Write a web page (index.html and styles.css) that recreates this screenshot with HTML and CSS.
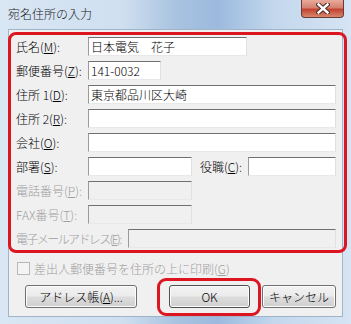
FILE: index.html
```html
<!DOCTYPE html>
<html lang="ja">
<head>
<meta charset="UTF-8">
<title>宛名住所の入力</title>
<link rel="stylesheet" href="styles.css">
</head>
<body>

<div class="window">
  <div class="titlebar">
    <span class="title">宛名住所の入力</span>
    <div class="close">
      <svg width="14" height="11" viewBox="0 0 14 11">
        <path d="M2.5 1.5 L11.5 9.5 M11.5 1.5 L2.5 9.5" stroke="#4a2a28" stroke-width="4.4" stroke-linecap="square"/>
        <path d="M2.5 1.5 L11.5 9.5 M11.5 1.5 L2.5 9.5" stroke="#ffffff" stroke-width="2.4" stroke-linecap="square"/>
      </svg>
    </div>
  </div>

  <div class="client">
    <div class="form">
      <div class="row">
        <span class="lbl">氏名(<u>M</u>):</span>
        <div class="field w-name">日本電気　花子</div>
      </div>
      <div class="row">
        <span class="lbl">郵便番号(<u>Z</u>):</span>
        <div class="field w-zip">141-0032</div>
      </div>
      <div class="row">
        <span class="lbl">住所 1(<u>D</u>):</span>
        <div class="field grow">東京都品川区大崎</div>
      </div>
      <div class="row">
        <span class="lbl">住所 2(<u>R</u>):</span>
        <div class="field grow"></div>
      </div>
      <div class="row">
        <span class="lbl">会社(<u>O</u>):</span>
        <div class="field grow"></div>
      </div>
      <div class="row">
        <span class="lbl">部署(<u>S</u>):</span>
        <div class="field w-half"></div>
        <span class="lbl lbl-post">役職(<u>C</u>):</span>
        <div class="field grow"></div>
      </div>
      <div class="row">
        <span class="lbl disabled">電話番号(<u>P</u>):</span>
        <div class="field w-half off"></div>
      </div>
      <div class="row">
        <span class="lbl disabled">FAX番号(<u>T</u>):</span>
        <div class="field w-half off"></div>
      </div>
      <div class="row">
        <span class="lbl lbl-mail disabled">電子メールアドレス(<u>E</u>):</span>
        <div class="field grow off"></div>
      </div>
    </div>

    <div class="check-row">
      <span class="checkbox"></span>
      <span class="disabled">差出人郵便番号を住所の上に印刷(<u>G</u>)</span>
    </div>

    <div class="buttons">
      <button class="button btn-book">アドレス帳(<u>A</u>)...</button>
      <button class="button btn-ok">OK</button>
      <button class="button btn-cancel">キャンセル</button>
    </div>
  </div>

  <div class="mark mark-form"></div>
  <div class="mark mark-ok"></div>
</div>

</body>
</html>
```

FILE: styles.css
```css
body {
  margin: 0;
  font-family: "Noto Sans CJK JP", "Liberation Sans", sans-serif;
  font-size: 12px;
  font-weight: 300;
  color: #000;
}
.window {
  position: relative;
  width: 351px;
  height: 324px;
  overflow: hidden;
  background: linear-gradient(90deg, #d9e6f3 0%, #cfdff0 35%, #a9c3e0 50%, #9cbade 62%, #c3d7ed 78%, #d6e4f3 100%);
  display: flex;
  flex-direction: column;
}
.titlebar {
  height: 29px;
  display: flex;
  align-items: flex-start;
  justify-content: space-between;
  flex-shrink: 0;
}
.title {
  margin: 7px 0 0 8px;
  line-height: 14px;
  font-size: 12px;
  color: #1a1a1a;
}
.close {
  width: 43px;
  height: 18px;
  margin-right: 7px;
  border: 1px solid #6b3a36;
  border-top: none;
  border-radius: 0 0 4px 4px;
  background: linear-gradient(180deg, #e8ab9c 0%, #d58170 45%, #c2442f 55%, #d8866e 100%);
  display: flex;
  align-items: center;
  justify-content: center;
  box-sizing: border-box;
}
.client {
  margin: 0 8px;
  height: 288px;
  box-sizing: border-box;
  background: #f0f0f0;
  border: 1px solid #9fb3c9;
  padding: 7px 6px 0 7px;
  display: flex;
  flex-direction: column;
}
.form {
  display: flex;
  flex-direction: column;
  gap: 5px;
}
.row {
  display: flex;
  align-items: center;
  height: 19px;
}
.lbl {
  width: 72px;
  flex-shrink: 0;
  line-height: 19px;
  white-space: nowrap;
}
.lbl-post {
  width: 48px;
  margin-left: 8px;
}
.lbl-mail {
  width: 112px;
  letter-spacing: -1.6px;
}
.disabled {
  color: #a0a0a0;
}
.field {
  height: 19px;
  box-sizing: border-box;
  background: #fff;
  border: 1px solid;
  border-color: #707070 #e0e0e0 #e8e8e8 #9a9a9a;
  padding-left: 2px;
  line-height: 17px;
  font-size: 12px;
  white-space: nowrap;
}
.field.off {
  background: #f0f0f0;
}
.w-name { width: 159px; }
.w-zip { width: 73px; }
.w-half { width: 104px; }
.grow { flex: 1; }

.check-row {
  display: flex;
  align-items: center;
  gap: 4px;
  height: 13px;
  margin-top: 14px;
  padding-left: 1px;
}
.checkbox {
  width: 13px;
  height: 13px;
  box-sizing: border-box;
  border: 1px solid #b8b8b8;
  background: #f4f4f4;
}
.buttons {
  display: flex;
  margin-top: 10px;
  padding-left: 9px;
}
.button {
  height: 23px;
  font-family: inherit;
  font-size: 12px;
  font-weight: 300;
  color: #000;
  border: 1px solid #707070;
  border-radius: 3px;
  background: linear-gradient(180deg, #f2f2f2 0%, #ebebeb 48%, #dddddd 52%, #cfcfcf 100%);
  padding: 0;
  box-shadow: inset 0 0 0 1px #fcfcfc;
}
.btn-book { width: 112px; }
.btn-ok {
  width: 81px;
  margin-left: 32px;
  border-color: #505050;
}
.btn-cancel {
  width: 74px;
  margin-left: 12px;
}

.mark {
  position: absolute;
  border: 3px solid #dd1520;
  border-radius: 8px;
  box-sizing: border-box;
}
.mark-form {
  left: 8px;
  top: 32px;
  width: 339px;
  height: 221px;
}
.mark-ok {
  left: 157px;
  top: 278px;
  width: 104px;
  height: 38px;
  border-radius: 9px;
}
```
